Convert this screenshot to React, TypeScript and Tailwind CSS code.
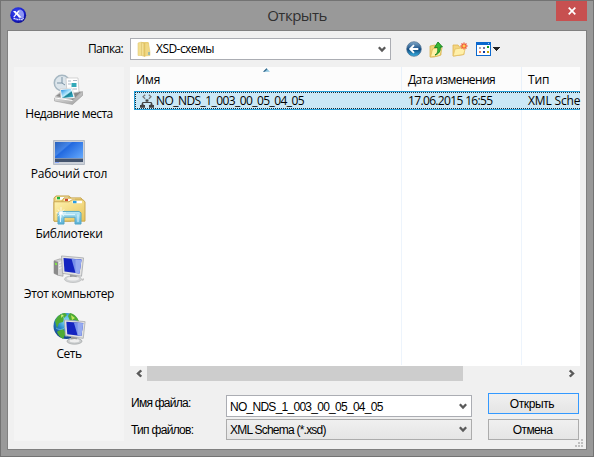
import React from 'react';

const ui = "font-['Open_Sans','Noto_Sans',sans-serif]";
const sans = "font-['Liberation_Sans',Arial,sans-serif]";

function AppIcon() {
  return (
    <svg width="17" height="17" viewBox="0 0 17 17" className="block">
      <defs>
        <radialGradient id="appBall" cx="0.4" cy="0.35" r="0.65">
          <stop offset="0" stopColor="#3f50ee" />
          <stop offset="0.7" stopColor="#1a20d2" />
          <stop offset="1" stopColor="#0c0e92" />
        </radialGradient>
      </defs>
      <circle cx="8.2" cy="8.2" r="7.9" fill="url(#appBall)" />
      <path d="M9.500 2.500c4 .5 5.500 4.500 4 8.500l-4.500.5L8 8z" fill="#a9b2fb" opacity="0.8" />
      <path d="M3 4h2.500l1.300 1.500L8 3.500h1.800L8 6.500l3.500 4H9L6.500 7.800 4.700 10H3.200l2.300-3z" fill="#fff" />
      <path d="M3.500 11.500h2l1 1h6l1-1.500" stroke="#dfe3ff" strokeWidth="1.300" strokeDasharray="1.500 .5" fill="none" />
    </svg>
  );
}

function FolderIcon() {
  return (
    <svg width="14" height="17" viewBox="0 0 14 17" className="block">
      <defs>
        <linearGradient id="fold" x2="1">
          <stop offset="0" stopColor="#f9ecae" />
          <stop offset="1" stopColor="#e3c05a" />
        </linearGradient>
      </defs>
      <path d="M1 2L4.500 1v13.500L1 14.500z" fill="#f3df8f" stroke="#e2ca78" strokeWidth=".6" />
      <path d="M5 1h6.500v12H5z" fill="#ecd17a" />
      <path d="M4.500 1.500L8 2.500v13l-3.500-1z" fill="url(#fold)" stroke="#d9ba60" strokeWidth=".6" />
      <path d="M8 2h3.500l1.500 9v3.500l-5 .5z" fill="#f0d885" stroke="#e0c468" strokeWidth=".5" />
      <path d="M11.500 11h1v3h-1z" fill="#4b9fd8" />
    </svg>
  );
}

function Chevron({ className = '' }: { className?: string }) {
  return (
    <svg width="8" height="7" viewBox="0 0 8 7" className={`block ${className}`}>
      <path d="M.8 1.200L4 4.600 7.200 1.200" fill="none" stroke="#5a5a5a" strokeWidth="2.300" />
    </svg>
  );
}

function BackIcon() {
  return (
    <svg width="16" height="16" viewBox="0 0 16 16" className="block">
      <defs>
        <linearGradient id="back" x2="0" y2="1">
          <stop offset="0" stopColor="#83a9c8" />
          <stop offset=".45" stopColor="#265c91" />
          <stop offset=".5" stopColor="#0d4479" />
          <stop offset="1" stopColor="#38b5e8" />
        </linearGradient>
      </defs>
      <circle cx="8" cy="8" r="7.300" fill="url(#back)" stroke="#496b8c" strokeWidth=".7" />
      <path d="M8 4.200L4.200 8 8 11.800M4.500 8H12.300" fill="none" stroke="#fff" strokeWidth="1.900" />
    </svg>
  );
}

function UpIcon() {
  return (
    <svg width="15" height="17" viewBox="0 0 15 17" className="block">
      <path d="M1 5l5-1 1.500 1H12v9l-7 2H1z" fill="#eed277" stroke="#d6ad43" strokeWidth=".7" />
      <path d="M3.500 8l7-1.500 2.500.5-2 7.500L1.500 16z" fill="#fff1a7" stroke="#d9b34c" strokeWidth=".7" />
      <path d="M6 14c3-1.500 3-5 2.500-7.500H5.500L9 1l4.500 5h-2.300C12 9.500 10 13 6 14z" fill="#37b834" stroke="#16801e" strokeWidth=".9" />
    </svg>
  );
}

function NewFolderIcon() {
  return (
    <svg width="16" height="15" viewBox="0 0 16 15" className="block">
      <path d="M1 3h5l1.500 2H12v7.500L2 14H1z" fill="#f3d581" stroke="#dfb452" strokeWidth=".8" />
      <path d="M3 7l9.500-1.500 1 .7-2 6.300L1.200 14z" fill="#fff0aa" stroke="#e3bd60" strokeWidth=".7" />
      <g stroke="#f0593a" strokeWidth="1.300">
        <path d="M12 .5v7M8.500 4h7M9.500 1.500l5 5M14.500 1.500l-5 5" />
      </g>
      <circle cx="12" cy="4" r="1.500" fill="#ffd052" />
    </svg>
  );
}

function ViewIcon() {
  return (
    <svg width="24" height="14" viewBox="0 0 24 14" className="block" shapeRendering="crispEdges">
      <path d="M0 0h15v14H0z" fill="#0b68ce" />
      <path d="M1 3h13v10H1z" fill="#fff" />
      <path d="M12 1h1v1h-1z" fill="#9fcbff" />
      <g>
        <path d="M3 5h2v2H3z" fill="#a9a9b6" />
        <path d="M7 5h2v2H7z" fill="#7878a0" />
        <path d="M11 4h2v2h-2z" fill="#179b1d" />
        <path d="M3 9h2v2H3z" fill="#f57d55" />
        <path d="M7 9h2v2H7z" fill="#0c3ca2" />
        <path d="M11 9h2v2h-2z" fill="#c5a50b" />
      </g>
      <path d="M17 5h7v1h-1v1h-1v1h-1v1h-1V8h-1V7h-1V6h-1z" fill="#222" />
    </svg>
  );
}

function SchemaIcon() {
  return (
    <svg width="14" height="14" viewBox="0 0 14 14" className="block">
      <path d="M5.200 .8L3 2.800l2.200 2M8.800 .8L11 2.800 8.800 4.800" fill="none" stroke="#777" strokeWidth="1.200" />
      <path d="M7 5.500v3M2.500 11V8.500h9V11" fill="none" stroke="#444" />
      <path d="M5.500 5.500h3v2h-3zM0 11h5v2.700H0zM9 11h5v2.700H9z" fill="#444" />
      <path d="M1.500 9.500h2v2h-2zM10.500 9.500h2v2h-2z" fill="#444" />
    </svg>
  );
}

function RecentIcon() {
  return (
    <svg width="32" height="32" viewBox="0 0 32 32" className="block">
      <defs>
        <linearGradient id="tray" x2="1" y2="1">
          <stop offset="0" stopColor="#f5f5f5" />
          <stop offset="1" stopColor="#989898" />
        </linearGradient>
        <linearGradient id="photo" x2="1" y2="1">
          <stop offset="0" stopColor="#1789dc" />
          <stop offset=".5" stopColor="#bcecff" />
          <stop offset=".6" stopColor="#168294" />
          <stop offset="1" stopColor="#45bddd" />
        </linearGradient>
      </defs>
      <path d="M2 22l6-5 21 0 1 4-10 9L2 27z" fill="#c6c6c6" />
      <path d="M3 22l6-4h19l-8 8z" fill="#8a8a8a" />
      <circle cx="9" cy="9" r="7.700" fill="#dce5eb" stroke="#a6b7c2" strokeWidth="1.500" />
      <path d="M9 3v6H4M9 9l3 2" fill="none" stroke="#7b93a5" />
      <path d="M13 4h12l1 14-12 2z" fill="#fff" stroke="#c1c1c1" strokeWidth=".7" />
      <path d="M15 7h3M20 6.500h4M15 10h3M20 15h4" stroke="#aab7c4" />
      <path d="M18.500 9h5v4h-5z" fill="#32a9b8" />
      <path d="M7 15l12-1 3 10-14 1z" fill="#fff" stroke="#c3c3c3" strokeWidth=".5" />
      <path d="M8 16l10-1 2.500 8L9 24z" fill="url(#photo)" />
      <path d="M1.500 24l18 2.500 10-9v4l-10 9-18-3.500z" fill="url(#tray)" stroke="#a0a0a0" strokeWidth=".6" />
      <path d="M2 24l17.500 2.500" stroke="#fff" />
    </svg>
  );
}

function DesktopIcon() {
  return (
    <svg width="32" height="25" viewBox="0 0 32 25" className="block">
      <defs>
        <linearGradient id="desktop" x2="1" y2=".8">
          <stop offset="0" stopColor="#2861bc" />
          <stop offset=".35" stopColor="#4384e7" />
          <stop offset=".4" stopColor="#2269df" />
          <stop offset="1" stopColor="#62a7fc" />
        </linearGradient>
      </defs>
      <path d="M.5.500h31v24H.5z" fill="#cbd0d8" stroke="#b4bbc5" />
      <path d="M2 2h28v19H2z" fill="url(#desktop)" />
      <path d="M2 18h28v4H2z" fill="#43536d" />
      <path d="M2 18.500h28" stroke="#8194b1" />
      <path d="M2 22h4v1H2z" fill="#8cabff" />
    </svg>
  );
}

function LibraryIcon() {
  return (
    <svg width="33" height="30" viewBox="0 0 33 31" preserveAspectRatio="none" className="block">
      <defs>
        <linearGradient id="library" x2="1" y2="1">
          <stop offset="0" stopColor="#fff4b2" />
          <stop offset="1" stopColor="#e8c45a" />
        </linearGradient>
        <linearGradient id="stand" x2="0" y2="1">
          <stop offset="0" stopColor="#bdeaf7" />
          <stop offset="1" stopColor="#55afd6" />
        </linearGradient>
      </defs>
      <path d="M1 3l2-2h13l2 2v24H1z" fill="#eed47d" stroke="#c6a552" />
      <path d="M3.500 2H15v3H3.500z" fill="#fff" />
      <path d="M4 2h3v2.500H4z" fill="#1eb53b" />
      <path d="M9 6l2-3h17l2 3v20H9z" fill="#eed47d" stroke="#c9a752" />
      <path d="M11.500 4H22v3H11.500z" fill="#fff" />
      <path d="M12 4h3v2.500h-3z" fill="#d3482d" />
      <path d="M1 7h15l3-2h11l2 2v20H1z" fill="url(#library)" stroke="#c9a650" />
      <path d="M19.500 6H29v2.500h-9.500z" fill="#fff" />
      <path d="M20 6h3.500v2.500H20z" fill="#279ce5" />
      <path d="M5 18.500l2-1.500h19l2 1.500V30h-6v-7H11v7H5z" fill="url(#stand)" stroke="#56a7c7" />
      <path d="M10 20h12M7.500 20v8M25 20v8" stroke="#e4f7ff" />
      <path d="M8 12.500v11M3 18.500h10M5 15l6 7M11 15l-6 7" stroke="#fff" strokeWidth=".8" />
      <circle cx="8" cy="18.500" r="1.800" fill="#fff" />
    </svg>
  );
}

function Monitor() {
  return (
    <>
      <path d="M1 1l22 2-2 19L2 19z" fill="#e2e2e2" stroke="#a2a5a8" strokeWidth=".8" />
      <path d="M3 3l18 1.600-2 14.600L4 17.200z" fill="#1424c0" />
      <path d="M11 4l10 .8-2 14.400-4-.6z" fill="#7790e9" />
      <path d="M15 4.300l6 .5-2 14.400-4-.6z" fill="#aebff5" opacity=".55" />
    </>
  );
}

function ComputerIcon() {
  return (
    <svg width="32" height="28" viewBox="0 0 32 29" preserveAspectRatio="none" className="block">
      <path d="M1 6l6-2 3 1v17l-5-1-4-2z" fill="#d4d4d4" stroke="#9a9a9a" strokeWidth=".7" />
      <path d="M1 6l4 1v14l-4-2z" fill="#8a8a8a" />
      <path d="M2 8l2 .5v2L2 10z" fill="#81e646" />
      <path d="M6 8l3-1M6 11l3-1M6 14l3-1" stroke="#f6f6f6" />
      <ellipse cx="20" cy="25" rx="8.500" ry="3.500" fill="#d3d5d6" stroke="#b0b2b3" strokeWidth=".6" />
      <path d="M17 18h6l1 6-7 1z" fill="#9b9e9f" />
      <ellipse cx="20" cy="24.500" rx="6" ry="2" fill="#eee" />
      <path d="M28 25l3-1v2l-2 1z" fill="#c4c4c4" />
      <g transform="translate(7.500 0)"><Monitor /></g>
    </svg>
  );
}

function NetworkIcon() {
  return (
    <svg width="33" height="33" viewBox="0 0 33 33" className="block">
      <defs>
        <radialGradient id="globe" cx=".5" cy=".3" r=".65">
          <stop offset="0" stopColor="#91e7fa" />
          <stop offset=".55" stopColor="#2687c9" />
          <stop offset="1" stopColor="#164792" />
        </radialGradient>
      </defs>
      <circle cx="13.500" cy="14" r="13" fill="url(#globe)" />
      <path d="M2 9C4 4 8 1 12 1l2 2-3 3-1 4-4 1-2 5zM17 1c5 1 8 5 9 9l-4-2-5 1-2-5zM5 19l5-2 3 4-3 6c-3-2-5-4-6-7z" fill="#4eab35" />
      <path d="M8 3l3 0-3 3zM18 3l4 3-3 2z" fill="#c2e75c" />
      <path d="M3 16c4 3 9 1 11-3M8 1c4 6 6 13 5 24" fill="none" stroke="#bdedff" strokeWidth=".7" opacity=".6" />
      <ellipse cx="21.500" cy="29.200" rx="7.500" ry="3" fill="#c9cccd" stroke="#a2a5a6" strokeWidth=".7" />
      <path d="M18 24h6v5h-6z" fill="#999" />
      <ellipse cx="21.500" cy="28.800" rx="5" ry="1.700" fill="#eee" />
      <g transform="translate(10.500 7) scale(.94 .88)"><Monitor /></g>
    </svg>
  );
}

interface PlaceProps {
  label: string;
  icon: React.ReactNode;
  gap: string;
  tracking: string;
}

function Place({ label, icon, gap, tracking }: PlaceProps) {
  return (
    <div className="flex h-[60px] flex-col items-center justify-end">
      <div className={gap}>{icon}</div>
      <span className={`h-[18px] text-[12px] leading-[18px] ${tracking}`}>{label}</span>
    </div>
  );
}

export default function App() {
  return (
    <div className={`flex h-[457px] w-[594px] flex-col overflow-hidden border border-[#737373] bg-[#999] px-[6px] pb-[6px] whitespace-nowrap text-black ${ui}`}>
      <header className="grid h-[29px] shrink-0 grid-cols-[160px_1fr_160px]">
        <div className="pt-[6px] pl-[3px]"><AppIcon /></div>
        <h1 className="text-center text-[15px] leading-[29px] tracking-[-0.5px] text-[#303030]">Открыть</h1>
        <button className="flex h-5 w-[31px] items-center justify-center justify-self-end bg-[#c75050]" aria-label="Закрыть">
          <svg width="8" height="8" viewBox="0 0 8 8"><path d="M.7.700l6.600 6.600M7.300.700L.7 7.300" stroke="#fff" strokeWidth="1.700" /></svg>
        </button>
      </header>

      <main className="flex min-h-0 flex-1 flex-col border border-[#808080] bg-[#f0f0f0]">
        <div className="flex h-9 shrink-0 items-start pt-[7px] pl-[80px]">
          <span className="w-[42px] text-[12px] leading-[22px] tracking-[-0.65px]">Папка:</span>
          <div className="flex h-[22px] w-[261px] items-center border border-[#abadb3] bg-white pr-[4px] pl-[6px]">
            <FolderIcon />
            <span className="ml-[5px] flex-1 text-[12px] tracking-[-0.55px]">XSD-схемы</span>
            <Chevron />
          </div>
          <div className="flex h-[22px] items-center pl-[15px]">
            <BackIcon />
            <div className="ml-[7px]"><UpIcon /></div>
            <div className="ml-[8px]"><NewFolderIcon /></div>
            <div className="ml-[8px]"><ViewIcon /></div>
          </div>
        </div>

        <div className="flex min-h-0 flex-1 pl-[6px]">
          <nav className="h-[374px] w-[110px] shrink-0 bg-[#f4f4f4]">
            <div className="flex h-[56px] flex-col items-center pt-[7px]">
              <RecentIcon />
              <span className="mt-[-1px] text-[12px] leading-[18px] tracking-[-0.53px]">Недавние места</span>
            </div>
            <Place label="Рабочий стол" icon={<DesktopIcon />} gap="mb-0" tracking="tracking-[-0.25px]" />
            <Place label="Библиотеки" icon={<LibraryIcon />} gap="mb-0" tracking="tracking-[-0.3px]" />
            <Place label="Этот компьютер" icon={<ComputerIcon />} gap="mb-[2px]" tracking="tracking-[-0.4px]" />
            <Place label="Сеть" icon={<NetworkIcon />} gap="mb-0" tracking="tracking-[-0.5px]" />
          </nav>

          <section className="ml-[6px] flex w-[450px] flex-col">
            <div className="flex h-[299px] flex-col bg-white">
              <div className="grid h-6 grid-cols-[272px_120px_58px] bg-[#fcfcfc] text-[12px] leading-[25px]">
                <div className="flex border-r border-[#e8f1fb] pl-[6px]">
                  <span className="w-[127px] tracking-[-0.1px]">Имя</span>
                  <svg width="7" height="4" viewBox="0 0 8 4" className="mt-[1px]"><path d="M4 0l4 4H0z" fill="#8dc5df" /><path d="M0 4l4-4 1 1-3 3z" fill="#39698b" /></svg>
                </div>
                <div className="flex border-r border-[#e8f1fb] pl-[6px]"><span className="tracking-[-0.6px]">Дата изменения</span></div>
                <div className="pl-[6px]"><span className="tracking-[-0.1px]">Тип</span></div>
              </div>
              <div className="ml-[4px] h-[19px] border-y border-l border-[#26a0da] bg-[#cbe8f6]">
                <div className="grid h-[17px] grid-cols-[266px_120px_58px] border-y border-l border-dotted border-[#182b34] text-[12px] leading-[16px]">
                  <div className="flex items-center pl-[4px]"><SchemaIcon /><span className="ml-[2px] tracking-[-0.57px]">NO_NDS_1_003_00_05_04_05</span></div>
                  <span className="pl-[6px] tracking-[-0.65px]">17.06.2015 16:55</span>
                  <span className="pl-[6px] tracking-[-0.15px]">XML Sche</span>
                </div>
              </div>
              <div className="grid flex-1 grid-cols-[272px_120px_58px] pb-px">
                <div className="border-r border-[#edf4fc]" />
                <div className="border-r border-[#edf4fc]" />
              </div>
            </div>
            <div className="flex h-[15px] items-center">
              <div className="flex w-[17px] justify-center"><Chevron className="rotate-90" /></div>
              <div className="h-[15px] w-[316px] bg-[#cdcdcd]" />
              <div className="flex flex-1 justify-end pr-[4px]"><Chevron className="-rotate-90" /></div>
            </div>

            <div className={`mt-[12px] flex ${sans} text-[12px]`}>
              <div className="flex w-[96px] flex-col pl-px">
                <span className="h-[27px] leading-[21px] tracking-[-0.75px]">Имя файла:</span>
                <span className="leading-[20px] tracking-[-0.7px]">Тип файлов:</span>
              </div>
              <div className="flex w-[246px] flex-col gap-[2px] pt-[2px]">
                <div className="flex h-[22px] items-center justify-between border border-[#abadb3] bg-white pr-[4px] pl-[3px]">
                  <span className="pt-px tracking-[-0.73px]">NO_NDS_1_003_00_05_04_05</span><Chevron />
                </div>
                <div className="flex h-[21px] items-center justify-between border border-[#acacac] bg-linear-to-b from-[#f0f0f0] to-[#e5e5e5] pr-[4px] pl-[3px]">
                  <span className="tracking-[-0.77px]">XML Schema (*.xsd)</span><Chevron />
                </div>
              </div>
              <div className="ml-[16px] flex w-[91px] flex-col gap-[5px]">
                <button className="h-[21px] border border-[#3399ff] bg-linear-to-b from-[#f0f0f0] to-[#e5e5e5] pr-[3px] leading-[20px] tracking-[-0.4px]">Открыть</button>
                <button className="h-[21px] border border-[#acacac] bg-linear-to-b from-[#f0f0f0] to-[#e5e5e5] pr-[2px] leading-[20px] tracking-[-0.6px]">Отмена</button>
              </div>
            </div>
            <svg width="8" height="8" viewBox="0 0 8 8" className="mt-[-1px] -mr-[3px] shrink-0 self-end" shapeRendering="crispEdges">
              <path d="M6 0h2v2H6zM3 3h2v2H3zM6 3h2v2H6zM0 6h2v2H0zM3 6h2v2H3zM6 6h2v2H6z" fill="#bfbfbf" />
            </svg>
          </section>
        </div>
      </main>
    </div>
  );
}
